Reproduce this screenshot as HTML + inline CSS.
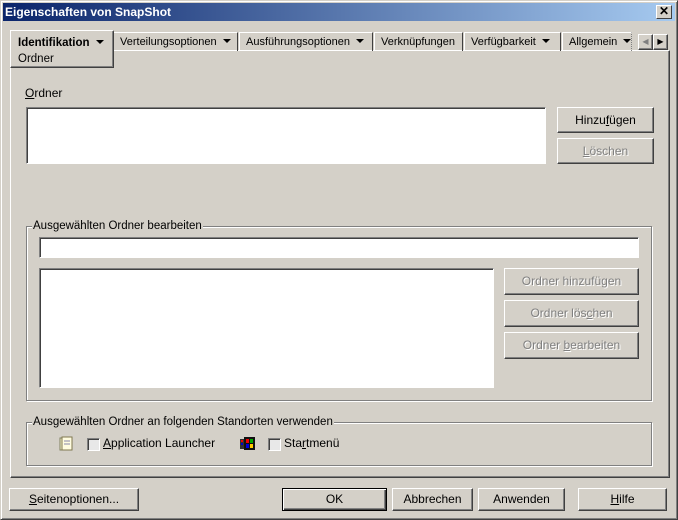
<!DOCTYPE html>
<html><head><meta charset="utf-8"><style>
*{box-sizing:border-box;margin:0;padding:0}
body{width:678px;height:520px;background:#d4d0c8;font-family:"Liberation Sans",Arial,sans-serif;font-size:12px;color:#000;position:relative;overflow:hidden}
.a{position:absolute}
.win{left:0;top:0;width:678px;height:520px;border:1px solid;border-color:#d4d0c8 #404040 #404040 #d4d0c8;box-shadow:inset 1px 1px 0 #fff,inset -1px -1px 0 #808080}
.title{left:3px;top:3px;width:672px;height:18px;background:linear-gradient(90deg,#0a246a,#a6caf0);color:#fff;font-weight:bold;font-size:12px;line-height:18px;padding-left:2px}
.close{left:656px;top:5px;width:16px;height:14px;background:#d4d0c8;border:1px solid;border-color:#fff #404040 #404040 #fff;font-size:12px;line-height:11px;text-align:center;font-weight:bold}
.btn{position:absolute;background:#d4d0c8;border:1px solid;border-color:#fff #404040 #404040 #fff;box-shadow:inset -1px -1px 0 #808080;text-align:center;font-size:12px}
.dis{color:#808080;text-shadow:1px 1px 0 #fff}
.sunk{position:absolute;background:#fff;border:1px solid;border-color:#808080 #fff #fff #808080;box-shadow:inset 1px 1px 0 #404040}
.grp{position:absolute;border:1px solid #808080;box-shadow:1px 1px 0 #fff,inset 1px 1px 0 #fff}
.gl{position:absolute;background:#d4d0c8;padding:0 1px;top:-8px;left:5px;line-height:14px;font-size:11.5px}
.tab{position:absolute;top:32px;height:19px;border-top:1px solid #fff;border-left:1px solid #fff;border-right:1px solid #404040;line-height:19px;padding-left:6px;white-space:nowrap;font-size:11px;overflow:hidden}
.arr{display:inline-block;width:0;height:0;border-left:4px solid transparent;border-right:4px solid transparent;border-top:4px solid #000;margin-left:6px;vertical-align:2px}
.cb{position:absolute;width:13px;height:13px;background:#e8e8e8;border:1px solid;border-color:#808080 #fff #fff #808080;box-shadow:inset 1px 1px 0 #404040}
u{text-decoration:underline}
</style></head><body>
<div class="a win"></div>
<div class="a title">Eigenschaften von SnapShot</div>
<div class="a close">✕</div>

<div class="a" style="left:10px;top:50px;width:660px;height:428px;border:1px solid;border-color:#fff #404040 #404040 #fff;box-shadow:inset -1px -1px 0 #808080"></div>

<div class="tab" style="left:113px;width:125px">Verteilungsoptionen<span class="arr"></span></div>
<div class="tab" style="left:239px;width:134px">Ausführungsoptionen<span class="arr"></span></div>
<div class="tab" style="left:374px;width:89px">Verknüpfungen</div>
<div class="tab" style="left:464px;width:97px">Verfügbarkeit<span class="arr"></span></div>
<div class="tab" style="left:562px;width:70px;border-right:1px dotted #808080">Allgemein<span class="arr"></span></div>
<div class="btn" style="left:638px;top:34px;width:15px;height:16px;font-size:8px;line-height:13px;color:#808080">◀</div>
<div class="btn" style="left:653px;top:34px;width:15px;height:16px;font-size:8px;line-height:13px">▶</div>
<div class="a" style="left:10px;top:30px;width:104px;height:38px;background:#d4d0c8;border:1px solid;border-color:#fff #404040 #404040 #fff;border-top-right-radius:2px;box-shadow:inset -1px -1px 0 #808080;padding:4px 0 0 7px;line-height:16px;font-size:11.5px"><b>Identifikation</b><span class="arr"></span><br>Ordner</div>

<div class="a" style="left:25px;top:86px"><u>O</u>rdner</div>
<div class="sunk" style="left:26px;top:107px;width:520px;height:57px"></div>
<div class="btn" style="left:557px;top:107px;width:97px;height:26px;line-height:24px">Hinzu<u>f</u>ügen</div>
<div class="btn dis" style="left:557px;top:138px;width:97px;height:26px;line-height:24px"><u>L</u>öschen</div>

<div class="grp" style="left:26px;top:226px;width:626px;height:175px"><span class="gl">Ausgewählten Ordner bearbeiten</span></div>
<div class="sunk" style="left:39px;top:237px;width:600px;height:21px"></div>
<div class="sunk" style="left:39px;top:268px;width:455px;height:120px"></div>
<div class="btn dis" style="left:504px;top:268px;width:135px;height:27px;line-height:25px">Ordner hinzufü<u>g</u>en</div>
<div class="btn dis" style="left:504px;top:300px;width:135px;height:27px;line-height:25px">Ordner lös<u>c</u>hen</div>
<div class="btn dis" style="left:504px;top:332px;width:135px;height:27px;line-height:25px">Ordner <u>b</u>earbeiten</div>

<div class="grp" style="left:26px;top:422px;width:626px;height:44px"><span class="gl">Ausgewählten Ordner an folgenden Standorten verwenden</span></div>
<svg class="a" style="left:59px;top:436px" width="14" height="16"><rect x="1" y="2" width="10" height="12" fill="#f4f0c8" stroke="#808060"/><rect x="3" y="1" width="10" height="13" fill="#fffce0" stroke="#807850"/><line x1="5" y1="5" x2="11" y2="5" stroke="#88a"/><line x1="5" y1="8" x2="11" y2="8" stroke="#88a"/></svg>
<div class="cb" style="left:87px;top:438px"></div>
<div class="a" style="left:103px;top:436px"><u>A</u>pplication Launcher</div>
<svg class="a" style="left:240px;top:436px" width="16" height="15"><rect x="0" y="3" width="4" height="10" fill="#333"/><rect x="1" y="4" width="2" height="2" fill="#e00"/><rect x="1" y="7" width="2" height="2" fill="#00c"/><path d="M4 1h11v13h-11z" fill="#111"/><rect x="6" y="3" width="3" height="4" fill="#e00"/><rect x="10" y="3" width="3" height="4" fill="#0a0"/><rect x="6" y="8" width="3" height="4" fill="#00d"/><rect x="10" y="8" width="3" height="4" fill="#fc0"/></svg>
<div class="cb" style="left:268px;top:438px"></div>
<div class="a" style="left:284px;top:436px">Sta<u>r</u>tmenü</div>

<div class="btn" style="left:9px;top:488px;width:130px;height:23px;line-height:21px"><u>S</u>eitenoptionen...</div>
<div class="btn" style="left:282px;top:488px;width:105px;height:23px;line-height:21px;border-color:#000;box-shadow:inset 1px 1px 0 #fff,inset -1px -1px 0 #404040,inset -2px -2px 0 #808080">OK</div>
<div class="btn" style="left:392px;top:488px;width:81px;height:23px;line-height:21px">Abbrechen</div>
<div class="btn" style="left:478px;top:488px;width:87px;height:23px;line-height:21px">Anwenden</div>
<div class="btn" style="left:578px;top:488px;width:89px;height:23px;line-height:21px"><u>H</u>ilfe</div>
</body></html>
